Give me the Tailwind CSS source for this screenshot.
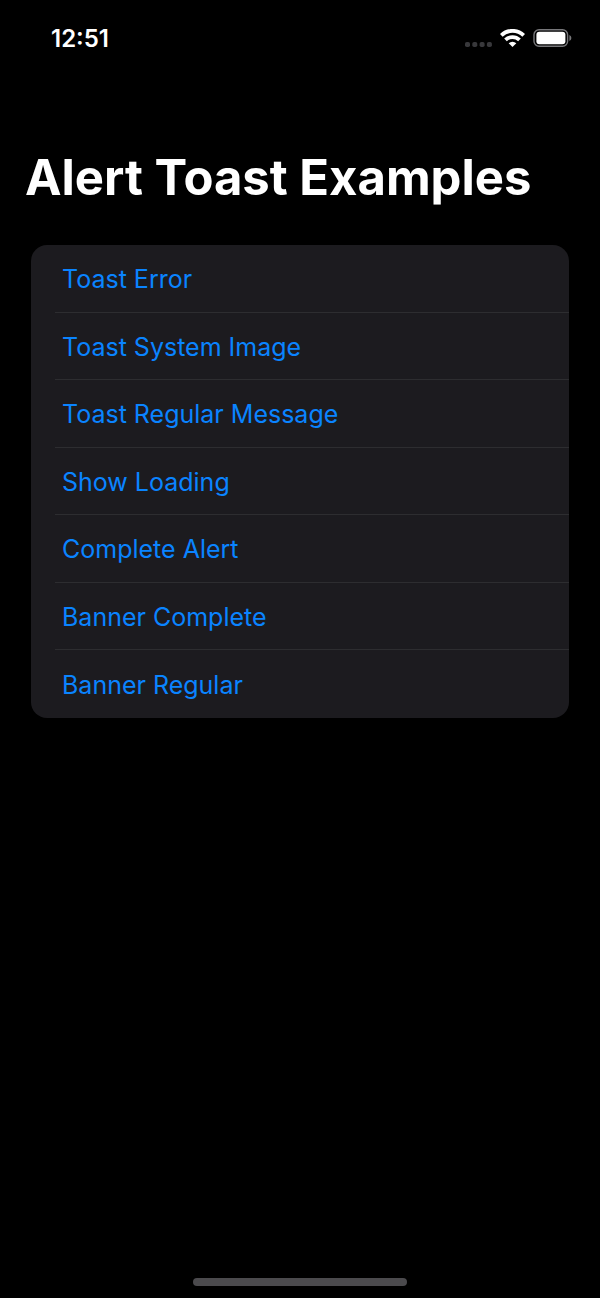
<!DOCTYPE html>
<html lang="en">
<head>
<meta charset="utf-8">
<title>Alert Toast Examples</title>
<meta name="viewport" content="width=device-width, initial-scale=1">
<script src="https://cdn.jsdelivr.net/npm/@tailwindcss/browser@4"></script>
</head>
<body class="bg-black font-['Inter','Liberation_Sans',sans-serif] text-white">
<div class="flex min-h-screen flex-col">
  <header class="flex h-[76px] items-center justify-between pr-7 pl-[51px]">
    <time class="pt-0.5 text-[24px] font-semibold">12:51</time>
    <div class="flex items-center gap-2">
      <svg class="mt-3 h-[5px] w-[27px]" viewBox="0 0 27 5" fill="#38383b" aria-hidden="true"><rect width="5" height="5" rx="1.8"/><rect x="7.3" width="5" height="5" rx="1.8"/><rect x="14.6" width="5" height="5" rx="1.8"/><rect x="21.9" width="5" height="5" rx="1.8"/></svg>
      <svg class="h-[19px] w-[25px]" viewBox="0 0 25 19" fill="none" stroke="#fff" stroke-width="3.8" aria-hidden="true"><path d="M1.3 6.4a16 16 0 0 1 22.4 0"/><path d="M5.5 10.9a10 10 0 0 1 14 0"/><path d="M12.5 18l-3.8-3.8a5.5 5.5 0 0 1 7.6 0z" fill="#fff" stroke="none"/></svg>
      <svg class="h-[18px] w-[39px]" viewBox="0 0 39 18" aria-hidden="true"><rect x="1" y=".8" width="33.6" height="16.4" rx="5" fill="none" stroke="#77777a" stroke-width="1.4"/><rect x="3.4" y="2.8" width="29" height="12.4" rx="3" fill="#fff"/><path d="M36.4 6q2 1 2 3t-2 3z" fill="#77777a"/></svg>
    </div>
  </header>
  <main class="flex-1 px-[31px] pt-[70px]">
    <h1 class="-ml-1.5 text-[49px] leading-[64px] font-bold whitespace-nowrap">Alert Toast Examples</h1>
    <ul class="mt-[35px] grid min-h-[473px] auto-rows-fr overflow-hidden rounded-2xl bg-[#1c1b1f] text-[25px] text-[#0a84ff]">
      <li class="flex pl-6"><button class="w-full border-b border-[#2d2d30] pt-[3px] pl-[7px] text-left">Toast Error</button></li>
      <li class="flex pl-6"><button class="w-full border-b border-[#2d2d30] pt-[3px] pl-[7px] text-left">Toast System Image</button></li>
      <li class="flex pl-6"><button class="w-full border-b border-[#2d2d30] pt-[3px] pl-[7px] text-left">Toast Regular Message</button></li>
      <li class="flex pl-6"><button class="w-full border-b border-[#2d2d30] pt-[3px] pl-[7px] text-left">Show Loading</button></li>
      <li class="flex pl-6"><button class="w-full border-b border-[#2d2d30] pt-[3px] pl-[7px] text-left">Complete Alert</button></li>
      <li class="flex pl-6"><button class="w-full border-b border-[#2d2d30] pt-[3px] pl-[7px] text-left">Banner Complete</button></li>
      <li class="flex pl-6"><button class="w-full pt-[3px] pl-[7px] text-left">Banner Regular</button></li>
    </ul>
  </main>
  <footer class="flex justify-center pb-3"><div class="h-2 w-[214px] rounded-full bg-[#4b4a4d]"></div></footer>
</div>
</body>
</html>
